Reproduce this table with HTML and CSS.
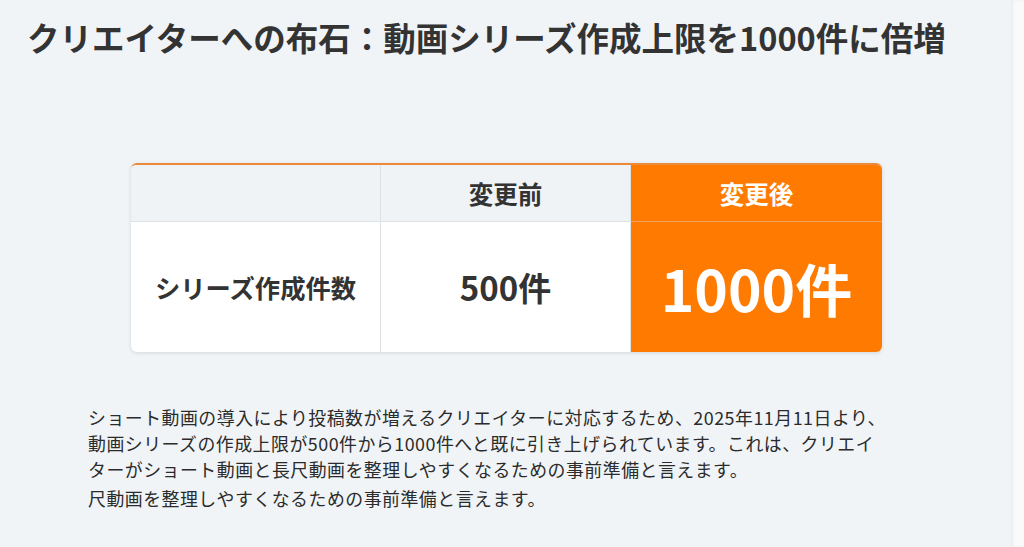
FILE: index.html
```html
<!DOCTYPE html>
<html lang="ja">
<head>
<meta charset="utf-8">
<link rel="stylesheet" href="styles.css">
</head>
<body>
<div class="page">
  <main class="main">
    <h1 class="title">クリエイターへの布石：動画シリーズ作成上限を1000件に倍増</h1>
    <div class="table">
      <div class="cell head blank"></div>
      <div class="cell head mid">変更前</div>
      <div class="cell head hot">変更後</div>
      <div class="cell body label">シリーズ作成件数</div>
      <div class="cell body before">500件</div>
      <div class="cell body hot after">1000件</div>
    </div>
    <div class="text">
      <p class="para">ショート動画の導入により投稿数が増えるクリエイターに対応するため、2025年11月11日より、<br>動画シリーズの作成上限が500件から1000件へと既に引き上げられています。これは、クリエイ<br>ターがショート動画と長尺動画を整理しやすくなるための事前準備と言えます。</p>
      <p class="para extra">尺動画を整理しやすくなるための事前準備と言えます。</p>
    </div>
  </main>
  <aside class="side"></aside>
</div>
</body>
</html>
```

FILE: styles.css
```css
html, body {
  margin: 0;
  padding: 0;
}
body {
  font-family: "Noto Sans CJK JP", "Noto Sans", sans-serif;
  color: #333;
  background: #fafafa;
}
.page {
  display: flex;
  width: 1024px;
  height: 547px;
  overflow: hidden;
}
.main {
  width: 1011px;
  background: #f0f4f7;
  padding: 13px 0 0 27px;
  box-sizing: border-box;
}
.side {
  flex: 1;
  background: #fafafa;
  box-shadow: inset 2px 0 3px rgba(0,0,0,0.06);
}
.title {
  margin: 0;
  font-size: 32.5px;
  font-weight: 700;
  line-height: 48px;
  color: #333;
  white-space: nowrap;
}
.table {
  margin: 102px 0 0 104px;
  width: 751px;
  display: grid;
  grid-template-columns: 250px 250px 251px;
  grid-template-rows: 57px 130px;
  border-top: 2px solid #ea8a3a;
  border-radius: 6px;
  overflow: hidden;
  background: #fff;
  box-shadow: 0 1px 4px rgba(0,0,0,0.12);
}
.cell {
  display: flex;
  align-items: center;
  justify-content: center;
  font-weight: 700;
  color: #333;
}
.head {
  background: #eff3f6;
  font-size: 24.5px;
  border-bottom: 1px solid #dde2e6;
}
.head.blank,
.head.mid,
.body.label,
.body.before {
  border-right: 1px solid #dde2e6;
}
.body.label {
  font-size: 25.3px;
}
.body.before {
  font-size: 33px;
}
.hot {
  background: #ff7a00;
  color: #fff;
}
.head.hot {
  border-bottom: 1px solid #f5a060;
}
.after {
  font-size: 57px;
}
.text {
  margin: 52px 0 0 61px;
  width: 900px;
}
.para {
  margin: 0;
  font-size: 17.9px;
  letter-spacing: 0.5px;
  line-height: 26px;
  color: #2b2b2b;
  white-space: nowrap;
}
.para.extra {
  margin-top: 3px;
}
```
